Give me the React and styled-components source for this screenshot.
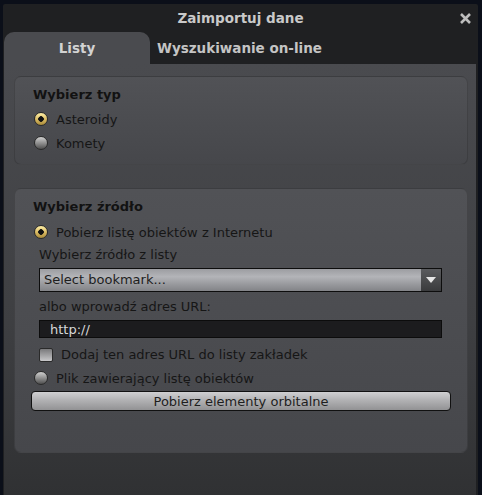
import React, { useState } from "react";
import styled, { createGlobalStyle } from "styled-components";

const GlobalStyle = createGlobalStyle`
  html, body {
    margin: 0;
    padding: 0;
    background: #0b0f19;
    font-family: "DejaVu Sans", "Liberation Sans", sans-serif;
  }
`;

const Page = styled.div`
  width: 482px;
  height: 495px;
  padding: 4px 4px 0 3px;
  box-sizing: border-box;
  background: #0b0f19;
`;

const Dialog = styled.div`
  width: 475px;
  height: 491px;
  display: flex;
  flex-direction: column;
  background: #1f2022;
  border-radius: 2px 2px 0 0;
`;

const TitleBar = styled.div`
  height: 28px;
  display: grid;
  grid-template-columns: 1fr auto 1fr;
  align-items: center;
`;

const Title = styled.div`
  grid-column: 2;
  color: #c9c9c9;
  font-size: 13.5px;
  font-weight: bold;
`;

const CloseButton = styled.button`
  justify-self: end;
  margin-right: 5px;
  width: 16px;
  height: 16px;
  padding: 0;
  border: none;
  background: transparent;
  display: flex;
  align-items: center;
  justify-content: center;
  cursor: pointer;
`;

const TabRow = styled.div`
  height: 32px;
  display: flex;
  align-items: stretch;
  padding-left: 1px;
`;

const Tab = styled.div`
  width: ${(p) => (p.$active ? "146px" : "auto")};
  padding: ${(p) => (p.$active ? "0" : "0 0 0 7px")};
  display: flex;
  align-items: center;
  justify-content: ${(p) => (p.$active ? "center" : "flex-start")};
  background: ${(p) => (p.$active ? "#4a4b4f" : "transparent")};
  border-radius: 10px 10px 0 0;
  color: ${(p) => (p.$active ? "#d2d2d2" : "#c4c4c4")};
  font-size: 13.5px;
  font-weight: bold;
  cursor: pointer;
`;

const Panel = styled.div`
  flex: 1;
  margin: 0 2px 0 1px;
  padding: 12px 8px 0 10px;
  background: linear-gradient(#4a4b4f, #3e3f42 60%, #303133);
  display: flex;
  flex-direction: column;
  gap: 23px;
`;

const Group = styled.div`
  height: ${(p) => p.$height}px;
  box-sizing: border-box;
  padding: 10px 16px 0 16px;
  border-radius: 7px;
  background: linear-gradient(#515256, #46474b);
  border: 1px solid rgba(30, 30, 32, 0.25);
  display: flex;
  flex-direction: column;
`;

const Heading = styled.div`
  padding-left: 2px;
  height: 16px;
  line-height: 16px;
  font-size: 13px;
  font-weight: bold;
  color: #121212;
  margin-bottom: ${(p) => p.$gap}px;
`;

const RadioRow = styled.label`
  display: flex;
  align-items: center;
  gap: 8px;
  height: 24px;
  padding-left: 3px;
  font-size: 13px;
  color: #161616;
  cursor: pointer;
`;

const RadioDot = styled.span`
  width: 14px;
  height: 14px;
  box-sizing: border-box;
  border-radius: 50%;
  border: 1px solid #2a2a2a;
  background: ${(p) =>
    p.$checked
      ? "radial-gradient(circle at 50% 50%, #111 0 2.5px, transparent 3px), linear-gradient(#fff0a8, #d8b860 55%, #a88a3a)"
      : "linear-gradient(#d0d0d0, #8a8a8a 55%, #4e4e4e)"};
  flex-shrink: 0;
`;

const Indent = styled.div`
  margin: 0 9px 0 8px;
  display: flex;
  flex-direction: column;
`;

const SubLabel = styled.div`
  height: 21px;
  line-height: 21px;
  font-size: 13px;
  color: #161616;
`;

const Select = styled.div`
  height: 24px;
  box-sizing: border-box;
  border: 1px solid #0d0d0d;
  display: flex;
  background: linear-gradient(#9c9da1, #b3b4b8 35%, #98999d 70%, #828387);
  margin: 3px 0 4px;
`;

const SelectText = styled.div`
  flex: 1;
  padding-left: 4px;
  line-height: 22px;
  font-size: 13px;
  color: #1e1e1e;
`;

const SelectArrow = styled.div`
  width: 20px;
  background: linear-gradient(#5a5b5e, #3a3b3d);
  display: flex;
  align-items: center;
  justify-content: center;
`;

const UrlInput = styled.input`
  height: 18px;
  box-sizing: border-box;
  margin: 3px 0 5px;
  border: 1px solid #0c0c0c;
  background: #1c1c1e;
  color: #d8d8d8;
  font-family: inherit;
  font-size: 13px;
  padding: 0 0 0 10px;
  outline: none;
`;

const CheckRow = styled.label`
  display: flex;
  align-items: center;
  gap: 8px;
  height: 23px;
  font-size: 13px;
  color: #161616;
  cursor: pointer;
`;

const CheckBox = styled.span`
  width: 14px;
  height: 14px;
  box-sizing: border-box;
  border: 1px solid #2a2a2a;
  border-radius: 2px;
  background: linear-gradient(#7a7a7c, #a8a8aa 60%, #c8c8ca);
  flex-shrink: 0;
`;

const ActionButton = styled.button`
  margin-top: 1px;
  height: 20px;
  border: 1px solid #111;
  border-radius: 4px;
  background: linear-gradient(#d0d0d2, #b2b2b4 45%, #929294);
  font-family: inherit;
  font-size: 13px;
  color: #1e1e1e;
  padding: 0;
  cursor: pointer;
`;

function Radio({ checked, label, onClick }) {
  return (
    <RadioRow onClick={onClick}>
      <RadioDot $checked={checked} />
      {label}
    </RadioRow>
  );
}

export default function App() {
  const [kind, setKind] = useState("asteroids");
  const [source, setSource] = useState("internet");
  const [url, setUrl] = useState("http://");

  return (
    <>
      <GlobalStyle />
      <Page>
        <Dialog>
          <TitleBar>
            <Title>Zaimportuj dane</Title>
            <CloseButton aria-label="close">
              <svg width="13" height="13" viewBox="0 0 13 13">
                <path d="M2 2 L11 11 M11 2 L2 11" stroke="#bdbdbd" strokeWidth="2.6" />
              </svg>
            </CloseButton>
          </TitleBar>
          <TabRow>
            <Tab $active>Listy</Tab>
            <Tab>Wyszukiwanie on-line</Tab>
          </TabRow>
          <Panel>
            <Group $height={89}>
              <Heading $gap={4}>Wybierz typ</Heading>
              <Radio
                checked={kind === "asteroids"}
                label="Asteroidy"
                onClick={() => setKind("asteroids")}
              />
              <Radio
                checked={kind === "comets"}
                label="Komety"
                onClick={() => setKind("comets")}
              />
            </Group>
            <Group $height={265}>
              <Heading $gap={5}>Wybierz źródło</Heading>
              <Radio
                checked={source === "internet"}
                label="Pobierz listę obiektów z Internetu"
                onClick={() => setSource("internet")}
              />
              <Indent>
                <SubLabel>Wybierz źródło z listy</SubLabel>
                <Select>
                  <SelectText>Select bookmark...</SelectText>
                  <SelectArrow>
                    <svg width="10" height="6" viewBox="0 0 10 6">
                      <path d="M0 0 L10 0 L5 6 Z" fill="#e6e6e6" />
                    </svg>
                  </SelectArrow>
                </Select>
                <SubLabel>albo wprowadź adres URL:</SubLabel>
                <UrlInput value={url} onChange={(e) => setUrl(e.target.value)} />
                <CheckRow>
                  <CheckBox />
                  Dodaj ten adres URL do listy zakładek
                </CheckRow>
              </Indent>
              <Radio
                checked={source === "file"}
                label="Plik zawierający listę obiektów"
                onClick={() => setSource("file")}
              />
              <ActionButton>Pobierz elementy orbitalne</ActionButton>
            </Group>
          </Panel>
        </Dialog>
      </Page>
    </>
  );
}
